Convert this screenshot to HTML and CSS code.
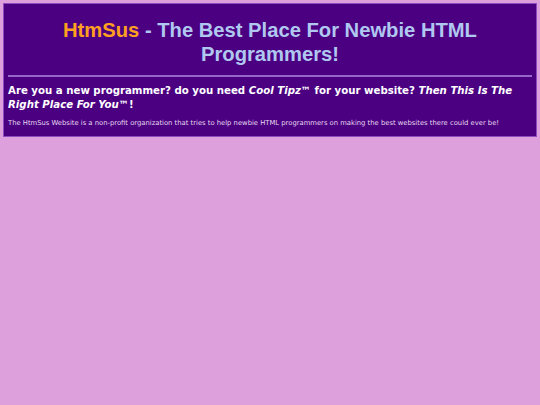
FILE: index.html
```html
<!DOCTYPE html>
<html>
<head>
<meta charset="utf-8">
<title>HtmSus</title>
<link rel="stylesheet" href="styles.css">
</head>
<body>
<div class="box">
  <h1 class="title"><span class="brand">HtmSus</span> - The Best Place For Newbie HTML Programmers!</h1>
  <hr class="rule">
  <p class="lead">Are you a new programmer? do you need <i>Cool Tipz™</i> for your website? <i>Then This Is The Right Place For You™</i>!</p>
  <p class="small">The HtmSus Website is a non-profit organization that tries to help newbie HTML programmers on making the best websites there could ever be!</p>
</div>
</body>
</html>
```
FILE: styles.css
```css
html, body {
  margin: 0;
  padding: 0;
}
body {
  background: #dda0dd;
  padding: 3px;
}
.box {
  background: #4b0082;
  border: 1px solid #8a4cc0;
  padding: 4px 4px 8px 4px;
}
.title {
  margin: 10px 0 9px 0;
  font-family: "Liberation Sans", Arial, sans-serif;
  font-weight: bold;
  font-size: 20.2px;
  line-height: 24px;
  color: #b0c8f0;
  text-align: center;
}
.brand {
  color: #ffa020;
}
.rule {
  border: none;
  border-top: 2px solid #9966cc;
  margin: 0 0 7px 0;
}
.lead {
  margin: 0 0 6px 0;
  font-family: "DejaVu Sans", Verdana, sans-serif;
  font-weight: bold;
  font-size: 10.2px;
  line-height: 14px;
  color: #ffffff;
}
.small {
  margin: 0;
  font-family: "DejaVu Sans", Verdana, sans-serif;
  font-size: 6.8px;
  line-height: 10px;
  color: #e6d8f0;
}
```
